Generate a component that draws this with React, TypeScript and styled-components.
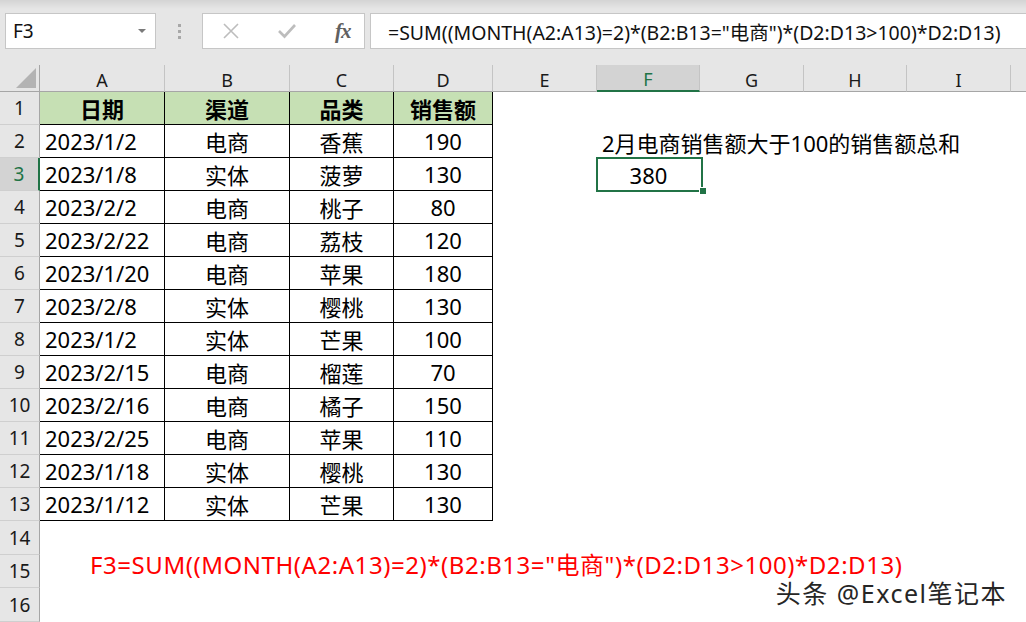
import React from "react";
import styled, { createGlobalStyle, css } from "styled-components";

const GlobalStyle = createGlobalStyle`
  html, body {
    margin: 0;
    padding: 0;
    background: #fff;
  }
  body {
    font-family: "Noto Sans", "Noto Sans CJK SC", sans-serif;
  }
`;

const Window = styled.div`
  position: relative;
  width: 1026px;
  height: 622px;
  overflow: hidden;
  display: flex;
  flex-direction: column;
  background: #fff;
`;

const FormulaBar = styled.div`
  height: 65px;
  box-sizing: border-box;
  padding: 13px 0 16px 5px;
  display: flex;
  align-items: stretch;
  background: linear-gradient(#d4d4d4 0, #e6e6e6 9px, #e6e6e6 100%);
`;

const NameBox = styled.div`
  width: 151px;
  box-sizing: border-box;
  background: #fff;
  border: 1px solid #c6c6c6;
  display: flex;
  align-items: center;
  justify-content: space-between;
  padding: 0 9px 0 7px;
  font-size: 19px;
  color: #111;
`;

const DropArrow = styled.span`
  width: 0;
  height: 0;
  border-left: 4px solid transparent;
  border-right: 4px solid transparent;
  border-top: 4px solid #7a7a7a;
`;

const Grip = styled.div`
  width: 46px;
  display: flex;
  flex-direction: column;
  align-items: center;
  justify-content: center;
  gap: 3px;

  span {
    width: 3px;
    height: 3px;
    background: #a8a8a8;
  }
`;

const FxBox = styled.div`
  width: 163px;
  box-sizing: border-box;
  background: #fff;
  border: 1px solid #c6c6c6;
  display: flex;
  align-items: center;
  padding-left: 20px;
  gap: 39px;
`;

const FxLabel = styled.span`
  font-family: "Liberation Serif", "DejaVu Serif", serif;
  font-style: italic;
  font-weight: bold;
  font-size: 21px;
  color: #606060;
  letter-spacing: -1px;
`;

const FormulaInput = styled.div`
  flex: 1;
  margin-left: 5px;
  margin-right: -2px;
  background: #fff;
  border: 1px solid #c6c6c6;
  display: flex;
  align-items: center;
  padding-left: 17px;
  font-size: 19.5px;
  color: #111;
  white-space: nowrap;
`;

const Sheet = styled.div`
  display: grid;
  grid-template-columns: 40px 125px 125px 104px 99px 104px 103px 104px 103px 104px 104px;
  grid-template-rows: 27px repeat(13, 33px) 34px 33px 34px;
`;

const Corner = styled.div`
  background: #e6e6e6;
  border-right: 1px solid #a6a6a6;
  border-bottom: 1px solid #a6a6a6;
  display: flex;
  align-items: flex-end;
  justify-content: flex-end;
  padding: 0 3px 3px 0;

  &::after {
    content: "";
    width: 20px;
    height: 20px;
    background: #b3b3b3;
    clip-path: polygon(100% 0, 100% 100%, 0 100%);
  }
`;

const ColHeader = styled.div<{ $active?: boolean }>`
  background: #e6e6e6;
  border-right: 1px solid #c4c4c4;
  border-bottom: 1px solid #a6a6a6;
  display: flex;
  align-items: center;
  justify-content: center;
  padding-top: 3px;
  font-size: 18px;
  color: #1a1a1a;
  ${(p) =>
    p.$active &&
    css`
      background: #d3d3d3;
      color: #217346;
      border-bottom: 2px solid #217346;
    `}
`;

const RowHeader = styled.div<{ $active?: boolean }>`
  background: #e6e6e6;
  border-right: 1px solid #a6a6a6;
  border-bottom: 1px solid #cfcfcf;
  display: flex;
  align-items: center;
  justify-content: center;
  font-size: 19px;
  color: #1a1a1a;
  ${(p) =>
    p.$active &&
    css`
      background: #d3d3d3;
      color: #217346;
      border-right: 2px solid #217346;
    `}
`;

const Cell = styled.div<{
  $align?: "left" | "center";
  $boxed?: boolean;
  $head?: boolean;
  $span?: string;
}>`
  position: relative;
  display: flex;
  align-items: center;
  justify-content: ${(p) => (p.$align === "center" ? "center" : "flex-start")};
  padding: 0 5px;
  font-size: 22px;
  color: #000;
  white-space: nowrap;
  grid-column: ${(p) => p.$span || "auto"};
  ${(p) =>
    p.$boxed &&
    css`
      border-right: 1px solid #000;
      border-bottom: 1px solid #000;
    `}
  ${(p) =>
    p.$head &&
    css`
      background: #c6e0b4;
      font-weight: bold;
    `}
`;

const SelectedCell = styled(Cell)`
  &::before {
    content: "";
    position: absolute;
    top: -1px;
    left: -1px;
    right: -3px;
    bottom: -1px;
    border: 2px solid #217346;
  }
  &::after {
    content: "";
    position: absolute;
    right: -6px;
    bottom: -3px;
    width: 6px;
    height: 6px;
    background: #217346;
    border-left: 1px solid #fff;
    border-top: 1px solid #fff;
  }
`;

const NoteText = styled(Cell)`
  padding-left: 50px;
  padding-bottom: 17px;
  color: #ff0000;
  font-size: 24px;
  letter-spacing: 0.55px;
`;

const Watermark = styled.div`
  position: absolute;
  right: 19px;
  bottom: 14px;
  font-size: 25px;
  line-height: 1.2;
  letter-spacing: 1.5px;
  color: #262626;
  text-shadow: 0 0 2px #fff, 0 0 2px #fff;
`;

const columns = ["A", "B", "C", "D", "E", "F", "G", "H", "I", "J"];

const rows = [
  ["日期", "渠道", "品类", "销售额"],
  ["2023/1/2", "电商", "香蕉", "190"],
  ["2023/1/8", "实体", "菠萝", "130"],
  ["2023/2/2", "电商", "桃子", "80"],
  ["2023/2/22", "电商", "荔枝", "120"],
  ["2023/1/20", "电商", "苹果", "180"],
  ["2023/2/8", "实体", "樱桃", "130"],
  ["2023/1/2", "实体", "芒果", "100"],
  ["2023/2/15", "电商", "榴莲", "70"],
  ["2023/2/16", "电商", "橘子", "150"],
  ["2023/2/25", "电商", "苹果", "110"],
  ["2023/1/18", "实体", "樱桃", "130"],
  ["2023/1/12", "实体", "芒果", "130"],
];

const formula = '=SUM((MONTH(A2:A13)=2)*(B2:B13="电商")*(D2:D13>100)*D2:D13)';

const CrossIcon = () => (
  <svg width="16" height="16" viewBox="0 0 16 16">
    <path d="M1 1 L15 15 M15 1 L1 15" stroke="#bdbdbd" strokeWidth="1.6" fill="none" />
  </svg>
);

const CheckIcon = () => (
  <svg width="18" height="16" viewBox="0 0 18 16">
    <path d="M1 8 L6.5 13.5 L17 2" stroke="#bdbdbd" strokeWidth="2.6" fill="none" />
  </svg>
);

const renderRow = (r: number) => {
  const cells: React.ReactNode[] = [];
  const data = rows[r - 1];

  if (r === 15) {
    cells.push(
      <NoteText key="note" $span="2 / -1">
        F3=SUM((MONTH(A2:A13)=2)*(B2:B13="电商")*(D2:D13&gt;100)*D2:D13)
      </NoteText>
    );
    return cells;
  }

  columns.forEach((col, i) => {
    if (data && i < 4) {
      cells.push(
        <Cell
          key={col}
          $boxed
          $head={r === 1}
          $align={r === 1 || i > 0 ? "center" : "left"}
        >
          {data[i]}
        </Cell>
      );
      return;
    }
    if (r === 2 && col === "F") {
      cells.push(
        <Cell key={col} $span="span 4">
          2月电商销售额大于100的销售额总和
        </Cell>
      );
      return;
    }
    if (r === 2 && ["G", "H", "I"].includes(col)) return;
    if (r === 3 && col === "F") {
      cells.push(
        <SelectedCell key={col} $align="center">
          380
        </SelectedCell>
      );
      return;
    }
    cells.push(<Cell key={col} />);
  });
  return cells;
};

const App = () => {
  return (
    <Window>
      <GlobalStyle />
      <FormulaBar>
        <NameBox>
          F3
          <DropArrow />
        </NameBox>
        <Grip>
          <span />
          <span />
          <span />
        </Grip>
        <FxBox>
          <CrossIcon />
          <CheckIcon />
          <FxLabel>fx</FxLabel>
        </FxBox>
        <FormulaInput>{formula}</FormulaInput>
      </FormulaBar>

      <Sheet>
        <Corner />
        {columns.map((c) => (
          <ColHeader key={c} $active={c === "F"}>
            {c}
          </ColHeader>
        ))}
        {Array.from({ length: 16 }, (_, k) => k + 1).map((r) => (
          <React.Fragment key={r}>
            <RowHeader $active={r === 3}>{r}</RowHeader>
            {renderRow(r)}
          </React.Fragment>
        ))}
      </Sheet>

      <Watermark>头条 @Excel笔记本</Watermark>
    </Window>
  );
};

export default App;
